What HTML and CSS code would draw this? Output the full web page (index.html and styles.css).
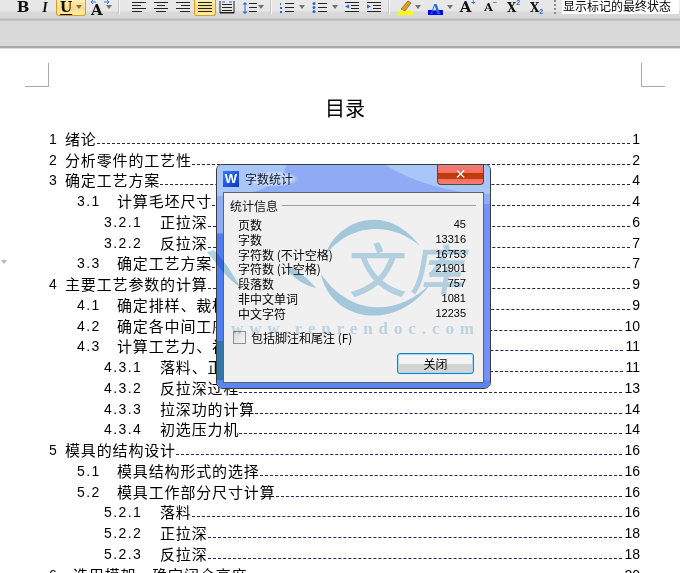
FILE: index.html
```html
<!DOCTYPE html>
<html lang="zh">
<head>
<meta charset="utf-8">
<title>字数统计</title>
<link rel="stylesheet" href="styles.css">
</head>
<body>
<div class="app">
  <header class="toolbar">
    <div class="tb-inner">
      <span class="btn w22 glyph gb">B</span>
      <span class="btn w22 glyph gi">I</span>
      <span class="btn split on"><span class="glyph gu">U</span><i class="arr"></i></span>
      <span class="btn split plain"><svg width="20" height="16" viewBox="0 0 20 16"><path d="M1 2h5M3 0l-2 2 2 2M19 2h-5M17 0l2 2-2 2" fill="none" stroke="#3a6fe0"/></svg><span class="glyph ga">A</span><i class="arr"></i></span>
      <i class="sep sep-wide"></i>
      <span class="btn w22"><svg width="16" height="13" viewBox="0 0 16 13"><path d="M1 1.5h14M1 4.5h9M1 7.5h14M1 10.5h10" stroke="#222" fill="none"/></svg></span>
      <span class="btn w22"><svg width="16" height="13" viewBox="0 0 16 13"><path d="M1 1.5h14M4 4.5h8M1 7.5h14M3 10.5h10" stroke="#222" fill="none"/></svg></span>
      <span class="btn w22"><svg width="16" height="13" viewBox="0 0 16 13"><path d="M1 1.5h14M6 4.5h9M1 7.5h14M5 10.5h10" stroke="#222" fill="none"/></svg></span>
      <span class="btn w22 on"><svg width="16" height="13" viewBox="0 0 16 13"><path d="M1 1.5h14M1 4.5h14M1 7.5h14M1 10.5h14" stroke="#222" fill="none"/></svg></span>
      <span class="btn w22"><svg width="16" height="13" viewBox="0 0 16 13"><path d="M1 0v12h14V0M3 3.5h10M3 6.5h10M3 9.5h10M1 11.5h14" stroke="#222" fill="none"/><path d="M3 1h3M10 1h3" stroke="#2c66e0" fill="none"/></svg></span>
      <span class="btn split plain"><svg width="16" height="14" viewBox="0 0 16 14"><path d="M3 2v10" stroke="#2c66e0"/><path d="M0.500 3.500 3 1l2.500 2.500zM0.500 10.500 3 13l2.500-2.500z" fill="#2c66e0"/><path d="M7 2.500h8M7 6.500h8M7 10.500h8" stroke="#222"/></svg><i class="arr"></i></span>
      <i class="sep"></i>
      <span class="btn split plain w33"><svg width="16" height="14" viewBox="0 0 16 14"><path d="M1 3h1M1 7h2M1 11h2" stroke="#2c66e0" stroke-width="2"/><path d="M6 2.500h9M6 6.500h9M6 10.500h9" stroke="#222"/></svg><i class="arr"></i></span>
      <span class="btn split plain w33"><svg width="16" height="14" viewBox="0 0 16 14"><circle cx="2" cy="2.500" r="1.500" fill="#2c66e0"/><circle cx="2" cy="6.500" r="1.500" fill="#2c66e0"/><circle cx="2" cy="10.500" r="1.500" fill="#2c66e0"/><path d="M6 2.500h9M6 6.500h9M6 10.500h9" stroke="#222"/></svg><i class="arr"></i></span>
      <span class="btn w22"><svg width="16" height="13" viewBox="0 0 16 13"><path d="M1 1.500h14M7 4.500h8M7 7.500h8M1 10.500h14" stroke="#222" fill="none"/><path d="M5 3.500v4L1 5.500z" fill="#2c66e0"/></svg></span>
      <span class="btn w22"><svg width="16" height="13" viewBox="0 0 16 13"><path d="M1 1.500h14M7 4.500h8M7 7.500h8M1 10.500h14" stroke="#222" fill="none"/><path d="M1 3.500v4l4-2z" fill="#2c66e0"/></svg></span>
      <i class="sep"></i>
      <span class="btn split plain w31"><svg width="16" height="15" viewBox="0 0 16 15"><path d="M4 9 11 1l3 2-6 8z" fill="#e89a1e" stroke="#7a4a10" stroke-width=".6"/><rect x="1" y="11" width="15" height="4" fill="#ff0"/></svg><i class="arr"></i></span>
      <span class="btn split plain w32"><span class="fontcolor"><span class="glyph gc">A</span></span><i class="arr"></i></span>
      <span class="btn w23 glyph gs">A<sup class="sp">+</sup></span>
      <span class="btn w23 glyph gsm">A<sup class="sp">&#8722;</sup></span>
      <span class="btn w23 glyph gs2">X<sup class="sp">2</sup></span>
      <span class="btn w23 glyph gs2">X<sub class="sp">2</sub></span>
      <i class="grip"></i>
      <span class="combo">显示标记的最终状态</span>
    </div>
  </header>
  <div class="strip"></div>

  <main class="page">
    <div class="corners"><i class="corner left"></i><i class="corner right"></i></div>
    <h1 class="title">目录</h1>
    <ol class="toc">
      <li class="row l1"><span class="no">1</span><span class="tx">绪论</span><i class="dots"></i><span class="pg">1</span></li>
      <li class="row l1"><span class="no">2</span><span class="tx">分析零件的工艺性</span><i class="dots"></i><span class="pg">2</span></li>
      <li class="row l1"><span class="no">3</span><span class="tx">确定工艺方案</span><i class="dots"></i><span class="pg">4</span></li>
      <li class="row l2"><span class="no">3.1</span><span class="tx">计算毛坯尺寸</span><i class="dots"></i><span class="pg">4</span></li>
      <li class="row l3"><span class="no">3.2.1</span><span class="tx">正拉深</span><i class="dots"></i><span class="pg">6</span></li>
      <li class="row l3"><span class="no">3.2.2</span><span class="tx">反拉深</span><i class="dots"></i><span class="pg">7</span></li>
      <li class="row l2"><span class="no">3.3</span><span class="tx">确定工艺方案</span><i class="dots"></i><span class="pg">7</span></li>
      <li class="row l1"><span class="no">4</span><span class="tx">主要工艺参数的计算</span><i class="dots"></i><span class="pg">9</span></li>
      <li class="row l2"><span class="no">4.1</span><span class="tx">确定排样、裁板方案</span><i class="dots"></i><span class="pg">9</span></li>
      <li class="row l2"><span class="no">4.2</span><span class="tx">确定各中间工序尺寸</span><i class="dots"></i><span class="pg">10</span></li>
      <li class="row l2"><span class="no">4.3</span><span class="tx">计算工艺力、初选设备</span><i class="dots"></i><span class="pg">11</span></li>
      <li class="row l3"><span class="no">4.3.1</span><span class="tx">落料、正拉深</span><i class="dots"></i><span class="pg">11</span></li>
      <li class="row l3"><span class="no">4.3.2</span><span class="tx">反拉深过程</span><i class="dots"></i><span class="pg">13</span></li>
      <li class="row l3"><span class="no">4.3.3</span><span class="tx">拉深功的计算</span><i class="dots"></i><span class="pg">14</span></li>
      <li class="row l3"><span class="no">4.3.4</span><span class="tx">初选压力机</span><i class="dots"></i><span class="pg">14</span></li>
      <li class="row l1"><span class="no">5</span><span class="tx">模具的结构设计</span><i class="dots"></i><span class="pg">16</span></li>
      <li class="row l2"><span class="no">5.1</span><span class="tx">模具结构形式的选择</span><i class="dots"></i><span class="pg">16</span></li>
      <li class="row l2"><span class="no">5.2</span><span class="tx">模具工作部分尺寸计算</span><i class="dots"></i><span class="pg">16</span></li>
      <li class="row l3"><span class="no">5.2.1</span><span class="tx">落料</span><i class="dots"></i><span class="pg">16</span></li>
      <li class="row l3"><span class="no">5.2.2</span><span class="tx">正拉深</span><i class="dots"></i><span class="pg">18</span></li>
      <li class="row l3"><span class="no">5.2.3</span><span class="tx">反拉深</span><i class="dots"></i><span class="pg">18</span></li>
      <li class="row l1"><span class="no no6">6</span><span class="tx">选用模架、确定闭合高度</span><i class="dots"></i><span class="pg">20</span></li>
    </ol>
  </main>

  <i class="ruler-mark"></i>

  <section class="dialog" aria-label="字数统计">
    <svg class="aero" width="276" height="228" viewBox="0 0 276 228" preserveAspectRatio="none">
      <rect width="276" height="228" fill="#8fabf6"/>
      <path d="M0 0h70q-6 30-70 32zM170 0h106v30q-60 -2-106-30z" fill="#a9c6f8"/>
      <path d="M0 70h8v158H0z" fill="#4f7df0"/>
      <path d="M266 40h10v188h-10z" fill="#6f93f7"/>
      <path d="M0 180h8v40H0z" fill="#2f77a8"/>
      <path d="M0 220h276v8H0z" fill="#5a86f2"/>
    </svg>
    <div class="d-title">
      <span class="wlogo">W</span>
      <span class="d-name">字数统计</span>
      <span class="closex"><b>✕</b></span>
    </div>
    <div class="d-body">
      <div class="legend"><span>统计信息</span><i></i></div>
      <dl class="stats">
        <div class="stat"><dt>页数</dt><dd>45</dd></div>
        <div class="stat"><dt>字数</dt><dd>13316</dd></div>
        <div class="stat"><dt>字符数 (不计空格)</dt><dd>16753</dd></div>
        <div class="stat"><dt>字符数 (计空格)</dt><dd>21901</dd></div>
        <div class="stat"><dt>段落数</dt><dd>757</dd></div>
        <div class="stat"><dt>非中文单词</dt><dd>1081</dd></div>
        <div class="stat"><dt>中文字符</dt><dd>12235</dd></div>
      </dl>
      <label class="check"><i class="box"></i><span>包括脚注和尾注 (F)</span></label>
      <div class="foot"><span class="close-btn">关闭</span></div>
    </div>
  </section>

  <div class="watermark" aria-hidden="true">
    <svg class="wm-arcs" width="680" height="573" viewBox="0 0 680 573">
      <path d="M325 256C335 222 385 200 420 246 392 222 350 222 325 256Z" fill="#aed4e8"/>
      <path d="M321 274C330 320 395 335 432 282 398 318 350 316 321 274Z" fill="#aed4e8"/>
      <path d="M207 252C215 262 228 280 240 287 232 272 222 258 214 250Z" fill="#aed4e8"/>
      <path d="M288 271C296 280 306 286 316 288 308 278 298 272 292 267Z" fill="#aed4e8"/>
    </svg>
    <span class="wm-wen">文</span>
    <span class="wm-ku">库</span>
    <span class="wm-url">www.renrendoc.com</span>
  </div>
</div>
</body>
</html>
```

FILE: styles.css
```css
* { box-sizing: border-box; }
html, body { margin: 0; padding: 0; }
body {
  width: 680px;
  height: 573px;
  overflow: hidden;
  background: #fff;
  font-family: "Liberation Sans", "Noto Sans CJK SC", sans-serif;
  color: #000;
}
.app { position: relative; width: 680px; height: 573px; overflow: hidden; }

/* toolbar */
.toolbar {
  height: 21px;
  background: linear-gradient(#e9e9e9 0, #e6e6e6 11px, #d8d8d8 12px, #d8d8d8 18px, #b9b9b9 19px, #c4c4c4 21px);
  overflow: hidden;
}
.tb-inner {
  display: flex;
  align-items: flex-start;
  height: 17px;
  padding-left: 12px;
  margin-top: -1px;
}
.btn { display: flex; align-items: center; justify-content: center; height: 17px; flex: none; }
.w22 { width: 22px; }
.w23 { width: 23px; }
.split { width: 30px; gap: 4px; }
.split.plain { width: 29px; position: relative; justify-content: flex-start; padding-left: 4px; }
.split.plain.w31 { width: 31px; }
.split.plain.w32 { width: 32px; }
.split.plain.w33 { width: 33px; }
.split.on { padding-left: 3px; justify-content: flex-start; margin-right: 0; }
.on {
  background: linear-gradient(#fff3b8, #ffd987 55%, #fff0a8);
  border: 1px solid #e09a20;
  border-top: 0;
  border-radius: 0 0 3px 3px;
}
.glyph { font-family: "Liberation Serif", serif; font-weight: 700; font-size: 15px; line-height: 1; color: #111; }
.gb { font-size: 15px; font-family: "DejaVu Serif", serif; }
.gi { font-style: italic; font-size: 14px; }
.gu { text-decoration: underline; text-underline-offset: 2px; font-size: 14px; font-family: "DejaVu Serif", serif; }
.ga { font-size: 15px; margin-top: 2px; font-family: "DejaVu Serif", serif; }
.split.plain > svg:first-child + .ga { position: absolute; left: 5px; top: 2px; }
.gc { color: #2c66e0; font-size: 15px; line-height: 11px; }
.gs { font-size: 15px; font-family: "DejaVu Serif", serif; }
.gsm { font-size: 11px; font-family: "DejaVu Serif", serif; }
.gs2 { font-size: 12px; font-family: "DejaVu Serif", serif; }
.sp { font-size: 7px; color: #2c66e0; font-family: "Liberation Sans", sans-serif; line-height: 8px; }
sup.sp { align-self: flex-start; }
sub.sp { align-self: flex-end; }
.fontcolor { display: block; width: 15px; height: 15px; border-bottom: 5px solid #0000e8; text-align: center; }
.arr {
  flex: none;
  width: 0; height: 0;
  border-left: 3.5px solid transparent;
  border-right: 3.5px solid transparent;
  border-top: 4px solid #707070;
}
.split.plain .arr { position: absolute; right: 3px; top: 6px; }
.sep { flex: none; width: 2px; height: 16px; background: #c6c6c6; border-right: 1px solid #f5f5f5; margin: 0 3px; }
.sep-wide { margin-right: 8px; }
.grip {
  flex: none;
  width: 2px; height: 14px;
  margin: 1px 6px 0 6px;
  background: repeating-linear-gradient(#8a8a8a 0 2px, transparent 2px 4px);
}
.combo {
  flex: none;
  width: 117px;
  height: 15px;
  padding-left: 1px;
  background: #fff;
  font-family: "Noto Sans CJK SC", sans-serif;
  font-size: 12px;
  line-height: 14px;
  white-space: nowrap;
  overflow: hidden;
}

.strip {
  height: 27px;
  background: #d9d9d9;
  border-bottom: 2px solid #a9a9a9;
  box-shadow: 0 1px 0 #dcdcdc;
}

/* page */
.page { padding-top: 15px; }
.corners { display: flex; justify-content: space-between; padding: 0 15px 0 25px; height: 24px; }
.corner { display: block; width: 24px; height: 24px; border: 0 solid #ababab; }
.corner.left { border-width: 0 1px 1px 0; }
.corner.right { border-width: 0 0 1px 1px; }
.title {
  margin: 6px 0 0 0;
  padding-left: 10px;
  text-align: center;
  font: 400 20px/30px "Noto Sans CJK SC", sans-serif;
}
.toc { list-style: none; margin: 5px 0 0; padding: 0 40px 0 49px; }
.row {
  display: flex;
  align-items: flex-end;
  height: 20.75px;
  font-family: "Noto Sans CJK SC", sans-serif;
  font-size: 15px;
  line-height: 20px;
  white-space: nowrap;
}
.no { flex: none; font-family: "Liberation Sans", sans-serif; font-size: 14px; letter-spacing: 1.4px; }
.l1 .no { width: 16px; }
.no6 { margin-right: 8px; }
.l2 { padding-left: 28px; }
.l2 .no { width: 40px; }
.l3 { padding-left: 55px; }
.l3 .no { width: 56px; }
.tx { flex: none; letter-spacing: 0.85px; }
.dots { flex: 1; min-width: 0; height: 1px; margin: 0 2px 5px 0; border-bottom: 1px dashed #1c2a55; }
.pg { flex: none; font-family: "Liberation Sans", sans-serif; font-size: 14px; }

.ruler-mark {
  position: absolute;
  left: 1px; top: 260px;
  width: 0; height: 0;
  border-left: 3px solid transparent;
  border-right: 3px solid transparent;
  border-top: 4px solid #b8b8b8;
}

/* dialog */
.dialog {
  position: absolute;
  left: 216px; top: 164px;
  width: 275px;
  height: 225px;
  display: flex;
  flex-direction: column;
  border: 1px solid #3c3c3c;
  border-radius: 6px 6px 7px 7px;
  overflow: hidden;
  padding: 0 6px 5px 6px;
  background: #8fabf6;
}
.aero { position: absolute; left: 0; top: 0; width: 100%; height: 100%; }
.d-title { position: relative; flex: none; height: 27px; display: flex; align-items: center; gap: 6px; }
.wlogo {
  flex: none;
  width: 16px; height: 16px;
  background: linear-gradient(135deg, #2d7cf0, #0f37c8);
  color: #fff;
  font: 700 13px/16px "Liberation Sans", sans-serif;
  text-align: center;
  margin-top: 1px;
}
.d-name {
  font: 12px/16px "Noto Sans CJK SC", sans-serif;
  color: #14142a;
  padding: 0 6px 0 0;
  background: radial-gradient(closest-side, #c8dcf8 70%, transparent);
}
.closex {
  position: absolute;
  right: 0; top: 0;
  width: 47px; height: 20px;
  border: 1px solid #4a4a4a;
  border-top: 0;
  border-radius: 0 0 4px 4px;
  background: linear-gradient(#e88078, #ff6a60 42%, #bb3a08 43%, #c04010 72%, #ff6a60 73%, #f08070);
  text-align: center;
  color: #fff;
  font: 700 14px/19px "DejaVu Sans", sans-serif;
  text-shadow: 0 0 1px #333;
}
.closex b { font-weight: 700; }
.d-body {
  position: relative;
  flex: 1;
  background: #f0f0f0;
  border: 1px solid #5c6470;
  padding: 5px 7px 0 6px;
  font-family: "Noto Sans CJK SC", sans-serif;
  font-size: 12px;
}
.legend { display: flex; align-items: center; gap: 4px; height: 15px; line-height: 15px; color: #111; }
.legend i { flex: 1; height: 1px; background: #a0a0a0; }
.stats { margin: 4px 0 0; padding: 0 10px 0 8px; }
.stat { display: flex; justify-content: space-between; height: 14.83px; line-height: 15px; }
.stat dt { letter-spacing: 0; white-space: nowrap; }
.stat dd { margin: 0; font-family: "Liberation Sans", sans-serif; font-size: 11px; }
.check { display: flex; align-items: center; gap: 5px; margin: 10px 0 0 3px; height: 14px; white-space: nowrap; }
.box {
  flex: none;
  width: 13px; height: 13px;
  border: 1px solid #8e8f8f;
  background: linear-gradient(135deg, #d8d8d8, #f8f8f8);
}
.foot { display: flex; justify-content: flex-end; margin-top: 8px; padding-right: 2px; }
.close-btn {
  width: 77px; height: 21px;
  border: 1px solid #1a7fc8;
  border-radius: 3px;
  box-shadow: inset 0 0 0 1px #9fdcf4;
  background: linear-gradient(#f4f4f4 50%, #d4d4d4 51%);
  text-align: center;
  line-height: 19px;
  font-size: 12px;
}

/* watermark */
.watermark { position: absolute; left: 0; top: 0; width: 680px; height: 573px; mix-blend-mode: multiply; pointer-events: none; }
.wm-arcs { position: absolute; left: 0; top: 0; }
.wm-wen, .wm-ku { position: absolute; color: #bcdcec; font-family: "Noto Sans CJK SC", sans-serif; font-weight: 500; line-height: 1; }
.wm-wen { left: 349px; top: 238px; font-size: 58px; }
.wm-ku { left: 414px; top: 240px; font-size: 54px; transform: skewX(-10deg); }
.wm-url {
  position: absolute;
  left: 231px; top: 320px;
  color: #c9e1ee;
  font: 700 17px/18px "Liberation Serif", serif;
  letter-spacing: 5.9px;
}
```
